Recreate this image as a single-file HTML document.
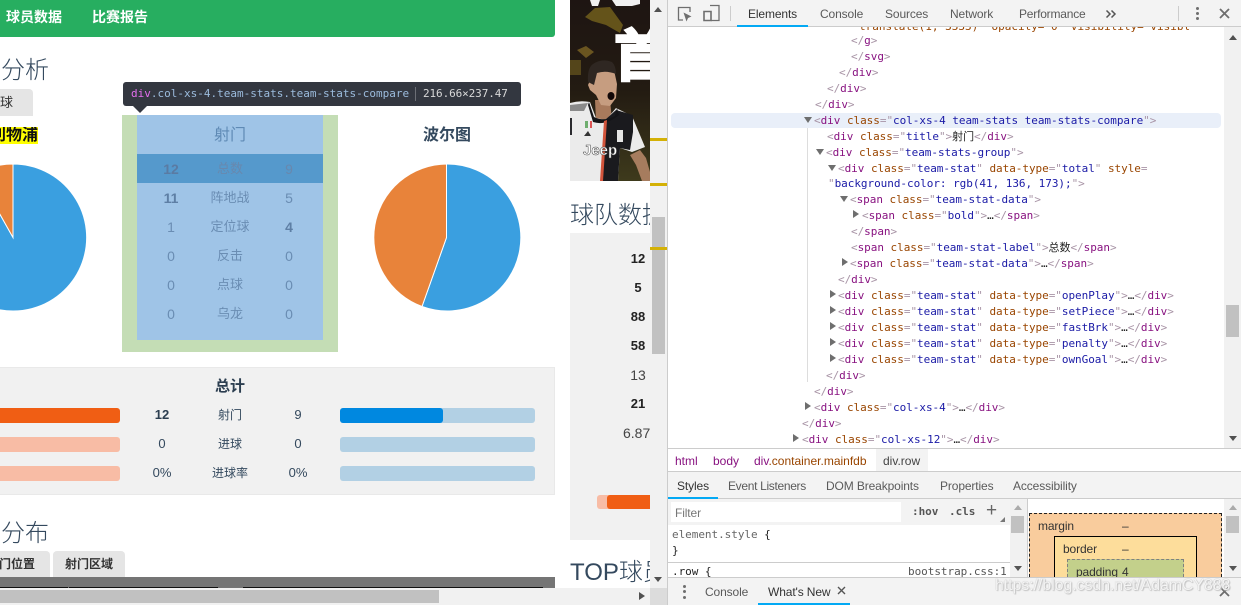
<!DOCTYPE html>
<html lang="zh"><head><meta charset="utf-8"><title>DevTools</title>
<style>
*{box-sizing:border-box}
html,body{margin:0;padding:0;width:1241px;height:605px;overflow:hidden;background:#fff}
body{position:relative;font-family:"Liberation Sans","Noto Sans CJK SC",sans-serif}
.a{position:absolute}
.t{position:absolute;white-space:pre;line-height:16px;height:16px}
.c{transform:translateX(-50%)}
.h{color:#34495e;font-size:24px;line-height:30px;height:30px;font-weight:300}
.n{font-size:13px;color:#333}
.m{position:absolute;white-space:pre;font-family:"DejaVu Sans Mono","Noto Sans CJK SC",monospace;font-size:11px;line-height:16px;height:16px;letter-spacing:-.04px;color:#a894a6}
.m i{font-style:normal;color:#881280}.m b{font-weight:normal;color:#994500}.m u{text-decoration:none;color:#1a1aa6}.m em{font-style:normal;color:#222}
.dt{font-size:12px;color:#5a5a5a;letter-spacing:-.12px}
.ar{position:absolute;width:0;height:0}
.down{border-left:4px solid transparent;border-right:4px solid transparent;border-top:6px solid #6e6e6e}
.right{border-top:4px solid transparent;border-bottom:4px solid transparent;border-left:6px solid #6e6e6e}
.st{color:#6a8db3;font-size:13px}
.bar{position:absolute;height:15px;border-radius:3px}
</style></head><body>

<!-- left page -->
<div class="a" style="left:0;top:0;width:555px;height:37px;background:#27ae60;border-radius:0 0 3px 0"></div>
<div class="t" style="left:6px;top:9px;font-size:14px;font-weight:bold;color:#fff">球员数据</div>
<div class="t" style="left:92px;top:9px;font-size:14px;font-weight:bold;color:#fff">比赛报告</div>
<div class="t h" style="left:1px;top:56px">分析</div>
<div class="a" style="left:0;top:89px;width:33px;height:27px;background:#e5e5e5;border-radius:0 4px 0 0"></div>
<div class="t" style="left:0;top:95px;font-size:13px;color:#333">球</div>
<div class="a" style="left:0;top:127px;width:38px;height:17px;background:#ff0;overflow:hidden"><div class="t" style="left:-10px;top:1px;font-size:16px;font-weight:bold;color:#111">利物浦</div></div>
<svg class="a" style="left:0;top:150px" width="100" height="170" viewBox="0 0 100 170"><path d="M13 87.5V14A73.5 73.5 0 1 1 -23 23.5Z" fill="#3a9fe0" stroke="#fff"/><path d="M13 87.5L-23 23.5A73.5 73.5 0 0 1 13 14Z" fill="#e8833a" stroke="#fff"/></svg>
<div class="a" style="left:0;top:367px;width:555px;height:128px;background:#f1f1f1;border:1px solid #e9e9e9;border-left:0"></div>
<div class="t c" style="left:230px;top:379px;font-size:15px;font-weight:bold;color:#2c3e50">总计</div>
<div class="bar" style="left:-10px;top:408px;width:130px;background:#f05e14"></div>
<div class="bar" style="left:-10px;top:437px;width:130px;background:#f8bca5"></div>
<div class="bar" style="left:-10px;top:466px;width:130px;background:#f8bca5"></div>
<div class="bar" style="left:340px;top:408px;width:195px;background:#b2d0e4"></div>
<div class="bar" style="left:340px;top:408px;width:103px;background:#0088e0"></div>
<div class="bar" style="left:340px;top:437px;width:195px;background:#b2d0e4"></div>
<div class="bar" style="left:340px;top:466px;width:195px;background:#b2d0e4"></div>
<div class="t c n" style="left:162px;top:407px;font-weight:bold;color:#2c3e50">12</div>
<div class="t c n" style="left:230px;top:407px;font-size:12px;color:#34495e">射门</div>
<div class="t c n" style="left:298px;top:407px;color:#34495e">9</div>
<div class="t c n" style="left:162px;top:436px;color:#34495e">0</div>
<div class="t c n" style="left:230px;top:436px;font-size:12px;color:#34495e">进球</div>
<div class="t c n" style="left:298px;top:436px;color:#34495e">0</div>
<div class="t c n" style="left:162px;top:465px;color:#34495e">0%</div>
<div class="t c n" style="left:230px;top:465px;font-size:12px;color:#34495e">进球率</div>
<div class="t c n" style="left:298px;top:465px;color:#34495e">0%</div>
<div class="t h" style="left:1px;top:519px">分布</div>
<div class="a" style="left:0;top:551px;width:50px;height:26px;background:#e5e5e5;border-radius:0 4px 0 0"></div>
<div class="a" style="left:53px;top:551px;width:72px;height:26px;background:#e5e5e5;border-radius:4px 4px 0 0"></div>
<div class="t" style="left:-13px;top:556px;font-size:12px;font-weight:bold;color:#333">射门位置</div>
<div class="t" style="left:65px;top:556px;font-size:12px;font-weight:bold;color:#333">射门区域</div>
<div class="a" style="left:0;top:577px;width:555px;height:11px;background:#757575"></div>
<div class="a" style="left:0;top:587px;width:68px;height:1px;background:#111"></div>
<div class="a" style="left:69px;top:587px;width:149px;height:1px;background:#111"></div>
<div class="a" style="left:243px;top:587px;width:150px;height:1px;background:#111"></div>
<div class="a" style="left:393px;top:587px;width:150px;height:1px;background:#111"></div>
<div class="a" style="left:0;top:588px;width:650px;height:17px;background:#f1f1f1"></div>
<div class="a" style="left:0;top:590px;width:439px;height:13px;background:#c1c1c1"></div>
<div class="ar right" style="left:639px;top:592px;border-left-color:#505050"></div>

<!-- highlight overlay -->
<div class="a" style="left:122px;top:115px;width:216px;height:237px;background:#c4ddb5"></div>
<div class="a" style="left:137px;top:115px;width:186px;height:225px;background:#9fc4e7"></div>
<div class="a" style="left:137px;top:154px;width:186px;height:29px;background:#5599cc"></div>
<div class="t c" style="left:230px;top:128px;font-size:16px;color:#5f8ab5">射门</div>
<div class="t c st" style="left:171px;top:161px;font-weight:bold;font-size:14px;color:#5a7ba3">12</div><div class="t c st" style="left:230px;top:161px;color:#6888ae">总数</div><div class="t c st" style="left:289px;top:161px;font-size:14px;color:#6888ae">9</div>
<div class="t c st" style="left:171px;top:190px;font-weight:bold;font-size:14px;color:#5e7fa5">11</div><div class="t c st" style="left:230px;top:190px">阵地战</div><div class="t c st" style="left:289px;top:190px;font-size:14px">5</div>
<div class="t c st" style="left:171px;top:219px;font-size:14px">1</div><div class="t c st" style="left:230px;top:219px">定位球</div><div class="t c st" style="left:289px;top:219px;font-weight:bold;font-size:14px;color:#5e7fa5">4</div>
<div class="t c st" style="left:171px;top:248px;font-size:14px">0</div><div class="t c st" style="left:230px;top:248px">反击</div><div class="t c st" style="left:289px;top:248px;font-size:14px">0</div>
<div class="t c st" style="left:171px;top:277px;font-size:14px">0</div><div class="t c st" style="left:230px;top:277px">点球</div><div class="t c st" style="left:289px;top:277px;font-size:14px">0</div>
<div class="t c st" style="left:171px;top:306px;font-size:14px">0</div><div class="t c st" style="left:230px;top:306px">乌龙</div><div class="t c st" style="left:289px;top:306px;font-size:14px">0</div>

<div class="t c" style="left:447px;top:128px;font-size:16px;font-weight:bold;color:#34495e">波尔图</div>
<svg class="a" style="left:370px;top:160px" width="155" height="155" viewBox="0 0 155 155"><path d="M76.5 77.5V4A73.5 73.5 0 1 1 52 146.5Z" fill="#3a9fe0" stroke="#fff"/><path d="M76.5 77.5L52 146.5A73.5 73.5 0 0 1 76.5 4Z" fill="#e8833a" stroke="#fff"/></svg>

<!-- tooltip -->
<div class="a" style="left:123px;top:82px;width:398px;height:24px;background:#333740;border-radius:3px"></div>
<div class="a" style="left:133px;top:106px;width:0;height:0;border-left:7px solid transparent;border-right:7px solid transparent;border-top:7px solid #333740"></div>
<div class="t" style="left:131px;top:86px;font-family:'DejaVu Sans Mono',monospace;font-size:11px;color:#9bbbdc"><span style="color:#e36eec">div</span>.col-xs-4.team-stats.team-stats-compare</div>
<div class="a" style="left:415px;top:87px;width:1px;height:14px;background:#6c6f76"></div>
<div class="t" style="left:423px;top:86px;font-family:'DejaVu Sans Mono',monospace;font-size:11px;color:#d9d9d9;letter-spacing:-.1px">216.66×237.47</div>

<!-- middle page -->
<svg class="a" style="left:570px;top:0" width="80" height="181" viewBox="0 0 80 181">
<defs><linearGradient id="bg" x1="0" y1="0" x2="0" y2="1"><stop offset="0" stop-color="#1e1512"/><stop offset=".5" stop-color="#231b12"/><stop offset="1" stop-color="#3e3a1c"/></linearGradient></defs>
<rect width="80" height="181" fill="url(#bg)"/>
<path d="M15 17L25 8L40 7L53 25L50 33L36 25L22 21Z" fill="#64531a"/>
<path d="M7 50L16 46L24 52L16 58Z" fill="#6a5520"/><path d="M0 60L11 60V75H0Z" fill="#54451a"/>
<path d="M20 0H30L28 6H22Z M42 0H70V4L62 6H46Z" fill="#f0f0f0"/>
<text x="44" y="76" font-family="'Noto Sans CJK SC',sans-serif" font-size="56" font-weight="bold" fill="#fff" stroke="#fff" stroke-width="2.5">首</text>
<path d="M25 100L40 100L42 120H26Z" fill="#a87a5c"/>
<path d="M22 76L28 70L44 70L47 84L46 98L40 106L31 105L26 95L20 90L18 85Z" fill="#c69d80"/>
<path d="M18 82Q17 68 23 64Q32 58 42 62Q46 66 46 74Q36 70 27 73L24 85Z" fill="#2f2722"/>
<ellipse cx="41" cy="96" rx="3.5" ry="4" fill="#120808"/>
<path d="M60 155L70 150L76 158L80 172V181H72L66 165Z" fill="#a67c5e"/>
<path d="M0 103Q10 100 20 102L26 118L36 120L46 108L62 116L75 147L62 152L50 148L48 181H0Z" fill="#ebebeb"/>
<path d="M35 120L46 110L63 115V132L60 150L50 148L48 181H31Z" fill="#1a1a1e"/>
<path d="M19 102L24 117Q34 122 45 116L47 108L49 115Q36 126 23 122L18 105Z" fill="#141417"/>
<path d="M34 121L37 120L33 181H30Z" fill="#d2543c"/>
<path d="M0 105L18 103L14 111H0Z" fill="#8a8a8a"/><path d="M0 118L2 118V135H0Z" fill="#2a2a2e"/>
<rect x="15" y="121" width="7" height="7" fill="#6fae6f"/><rect x="18" y="121" width="2" height="7" fill="#eee"/><rect x="20" y="121" width="2" height="7" fill="#d55"/>
<path d="M47 130H53V142H47Z" fill="#e5e5e5"/><path d="M14 136L18 131L21 136Z" fill="#333"/>
<text x="13" y="155" font-family="'Liberation Sans',sans-serif" font-size="15" font-weight="bold" fill="#fff" stroke="#444" stroke-width=".5">Jeep</text>
</svg>
<div class="a" style="left:570px;top:200px;width:80px;height:32px;overflow:hidden"><div class="t h" style="left:0;top:1px">球队数据</div></div>
<div class="a" style="left:570px;top:233px;width:80px;height:307px;background:#f1f1f1"></div>
<div class="t c" style="left:638px;top:251px;font-size:13px;font-weight:bold;color:#222">12</div>
<div class="t c" style="left:638px;top:280px;font-size:13px;font-weight:bold;color:#222">5</div>
<div class="t c" style="left:638px;top:309px;font-size:13px;font-weight:bold;color:#222">88</div>
<div class="t c" style="left:638px;top:338px;font-size:13px;font-weight:bold;color:#222">58</div>
<div class="t c" style="left:638px;top:367px;font-size:14px;color:#444">13</div>
<div class="t c" style="left:638px;top:396px;font-size:13px;font-weight:bold;color:#222">21</div>
<div class="a" style="left:570px;top:425px;width:80px;height:16px;overflow:hidden"><div class="t" style="left:53px;top:0;font-size:14px;color:#444">6.87</div></div>
<div class="a" style="left:597px;top:495px;width:53px;height:14px;background:#f8bca5;border-radius:3px 0 0 3px"></div>
<div class="a" style="left:607px;top:495px;width:43px;height:14px;background:#f05e14;border-radius:3px 0 0 3px"></div>
<div class="a" style="left:570px;top:558px;width:80px;height:30px;overflow:hidden"><div class="t h" style="left:0;top:0">TOP球员</div></div>

<!-- page scrollbar -->
<div class="a" style="left:650px;top:0;width:17px;height:588px;background:#f1f1f1"></div>
<div class="a" style="left:652px;top:217px;width:13px;height:137px;background:#c1c1c1"></div>
<div class="a" style="left:650px;top:138px;width:17px;height:3px;background:#d4b106"></div>
<div class="a" style="left:650px;top:183px;width:17px;height:3px;background:#d4b106"></div>
<div class="a" style="left:650px;top:247px;width:17px;height:3px;background:#d4b106"></div>
<div class="ar" style="left:654px;top:7px;border-left:4px solid transparent;border-right:4px solid transparent;border-bottom:5px solid #505050"></div>
<div class="ar" style="left:654px;top:577px;border-left:4px solid transparent;border-right:4px solid transparent;border-top:5px solid #505050"></div>
<div class="a" style="left:650px;top:588px;width:17px;height:17px;background:#dcdcdc"></div>
<div class="a" style="left:667px;top:0;width:1px;height:605px;background:#ccc"></div>

<!-- devtools top -->
<div class="a" style="left:668px;top:0;width:573px;height:27px;background:#f3f3f3;border-bottom:1px solid #ccc"></div>
<svg class="a" style="left:668px;top:0" width="70" height="27" viewBox="0 0 70 27" fill="none" stroke="#6e6e6e" stroke-width="1.3">
<path d="M15 20H10.5V7.5H22V12"/><path d="M15.5 12.5L23.5 16.5L20 18L18.5 21.5Z" fill="#6e6e6e" stroke="none"/>
<path d="M42 5.5H51V20.5H43"/><path d="M36 11.5H43V20.5H36Z" fill="#f3f3f3" stroke-width="1.6"/>
</svg>
<div class="a" style="left:730px;top:6px;width:1px;height:15px;background:#ccc"></div>
<div class="t dt" style="left:748px;top:6px;color:#333">Elements</div>
<div class="a" style="left:737px;top:25px;width:71px;height:2px;background:#03a9f4"></div>
<div class="t dt" style="left:820px;top:6px">Console</div>
<div class="t dt" style="left:885px;top:6px">Sources</div>
<div class="t dt" style="left:950px;top:6px">Network</div>
<div class="t dt" style="left:1019px;top:6px;letter-spacing:-.2px">Performance</div>
<svg class="a" style="left:1105px;top:9px" width="12" height="10" viewBox="0 0 12 10" fill="none" stroke="#555" stroke-width="1.5"><path d="M1.5 1.5L5 5L1.5 8.5M6.5 1.5L10 5L6.5 8.5"/></svg>
<div class="a" style="left:1178px;top:6px;width:1px;height:15px;background:#ccc"></div>
<div class="a" style="left:1196px;top:7px;width:3px;height:3px;background:#6e6e6e;border-radius:50%"></div><div class="a" style="left:1196px;top:12px;width:3px;height:3px;background:#6e6e6e;border-radius:50%"></div><div class="a" style="left:1196px;top:17px;width:3px;height:3px;background:#6e6e6e;border-radius:50%"></div>
<svg class="a" style="left:1218px;top:7px" width="13" height="13" viewBox="0 0 13 13"><path d="M2 2L11 11M11 2L2 11" stroke="#6e6e6e" stroke-width="1.8"/></svg>

<!-- elements tree -->
<div class="a" style="left:668px;top:27px;width:556px;height:421px;overflow:hidden;background:#fff">
<div class="a" style="left:3px;top:86px;width:550px;height:15px;background:#e9eff9;border-radius:4px"></div>
<div class="a" style="left:139px;top:101px;width:1px;height:254px;background:#ddd"></div>
<div class="a" style="left:0;top:1px;width:556px;height:420px">
<div class="m" style="left:191px;top:-9px;letter-spacing:0;color:#994500;width:330px;overflow:hidden">translate(1, 3333)" opacity="0" visibility="visible"&gt;#</div>
<div class="m" style="left:183px;top:5px">&lt;/<i>g</i>&gt;</div>
<div class="m" style="left:183px;top:21px">&lt;/<i>svg</i>&gt;</div>
<div class="m" style="left:171px;top:37px">&lt;/<i>div</i>&gt;</div>
<div class="m" style="left:159px;top:53px">&lt;/<i>div</i>&gt;</div>
<div class="m" style="left:147px;top:69px">&lt;/<i>div</i>&gt;</div>
<div class="ar down" style="left:136px;top:89px"></div>
<div class="m" style="left:146px;top:85px">&lt;<i>div</i> <b>class</b>="<u>col-xs-4 team-stats team-stats-compare</u>"&gt;</div>
<div class="m" style="left:159px;top:101px">&lt;<i>div</i> <b>class</b>="<u>title</u>"&gt;<em>射门</em>&lt;/<i>div</i>&gt;</div>
<div class="ar down" style="left:148px;top:121px"></div>
<div class="m" style="left:158px;top:117px">&lt;<i>div</i> <b>class</b>="<u>team-stats-group</u>"&gt;</div>
<div class="ar down" style="left:160px;top:137px"></div>
<div class="m" style="left:170px;top:133px">&lt;<i>div</i> <b>class</b>="<u>team-stat</u>" <b>data-type</b>="<u>total</u>" <b>style</b>=</div>
<div class="m" style="left:160px;top:148px">"<u>background-color: rgb(41, 136, 173);</u>"&gt;</div>
<div class="ar down" style="left:172px;top:168px"></div>
<div class="m" style="left:182px;top:164px">&lt;<i>span</i> <b>class</b>="<u>team-stat-data</u>"&gt;</div>
<div class="ar right" style="left:185px;top:182px"></div>
<div class="m" style="left:194px;top:180px">&lt;<i>span</i> <b>class</b>="<u>bold</u>"&gt;<em>…</em>&lt;/<i>span</i>&gt;</div>
<div class="m" style="left:183px;top:196px">&lt;/<i>span</i>&gt;</div>
<div class="m" style="left:183px;top:212px">&lt;<i>span</i> <b>class</b>="<u>team-stat-label</u>"&gt;<em>总数</em>&lt;/<i>span</i>&gt;</div>
<div class="ar right" style="left:174px;top:230px"></div>
<div class="m" style="left:182px;top:228px">&lt;<i>span</i> <b>class</b>="<u>team-stat-data</u>"&gt;<em>…</em>&lt;/<i>span</i>&gt;</div>
<div class="m" style="left:170px;top:244px">&lt;/<i>div</i>&gt;</div>
<div class="ar right" style="left:162px;top:262px"></div>
<div class="m" style="left:170px;top:260px">&lt;<i>div</i> <b>class</b>="<u>team-stat</u>" <b>data-type</b>="<u>openPlay</u>"&gt;<em>…</em>&lt;/<i>div</i>&gt;</div>
<div class="ar right" style="left:162px;top:278px"></div>
<div class="m" style="left:170px;top:276px">&lt;<i>div</i> <b>class</b>="<u>team-stat</u>" <b>data-type</b>="<u>setPiece</u>"&gt;<em>…</em>&lt;/<i>div</i>&gt;</div>
<div class="ar right" style="left:162px;top:294px"></div>
<div class="m" style="left:170px;top:292px">&lt;<i>div</i> <b>class</b>="<u>team-stat</u>" <b>data-type</b>="<u>fastBrk</u>"&gt;<em>…</em>&lt;/<i>div</i>&gt;</div>
<div class="ar right" style="left:162px;top:310px"></div>
<div class="m" style="left:170px;top:308px">&lt;<i>div</i> <b>class</b>="<u>team-stat</u>" <b>data-type</b>="<u>penalty</u>"&gt;<em>…</em>&lt;/<i>div</i>&gt;</div>
<div class="ar right" style="left:162px;top:326px"></div>
<div class="m" style="left:170px;top:324px">&lt;<i>div</i> <b>class</b>="<u>team-stat</u>" <b>data-type</b>="<u>ownGoal</u>"&gt;<em>…</em>&lt;/<i>div</i>&gt;</div>
<div class="m" style="left:158px;top:340px">&lt;/<i>div</i>&gt;</div>
<div class="m" style="left:146px;top:356px">&lt;/<i>div</i>&gt;</div>
<div class="ar right" style="left:137px;top:374px"></div>
<div class="m" style="left:146px;top:372px">&lt;<i>div</i> <b>class</b>="<u>col-xs-4</u>"&gt;<em>…</em>&lt;/<i>div</i>&gt;</div>
<div class="m" style="left:134px;top:388px">&lt;/<i>div</i>&gt;</div>
<div class="ar right" style="left:125px;top:406px"></div>
<div class="m" style="left:134px;top:404px">&lt;<i>div</i> <b>class</b>="<u>col-xs-12</u>"&gt;<em>…</em>&lt;/<i>div</i>&gt;</div>
</div>
</div>
<div class="a" style="left:1224px;top:27px;width:17px;height:421px;background:#f1f1f1"></div>
<div class="a" style="left:1226px;top:305px;width:13px;height:32px;background:#c1c1c1"></div>
<div class="ar" style="left:1229px;top:35px;border-left:4px solid transparent;border-right:4px solid transparent;border-bottom:5px solid #505050"></div>
<div class="ar" style="left:1229px;top:436px;border-left:4px solid transparent;border-right:4px solid transparent;border-top:5px solid #505050"></div>

<!-- crumbs -->
<div class="a" style="left:668px;top:448px;width:573px;height:24px;background:#fff;border-top:1px solid #ccc;border-bottom:1px solid #ccc"></div>
<div class="a" style="left:876px;top:449px;width:52px;height:22px;background:#f3f3f3"></div>
<div class="t" style="left:675px;top:453px;font-size:12px;color:#881280">html</div>
<div class="t" style="left:713px;top:453px;font-size:12px;color:#881280">body</div>
<div class="t" style="left:754px;top:453px;font-size:12px;color:#881280">div<span style="color:#994500">.container.mainfdb</span></div>
<div class="t" style="left:883px;top:453px;font-size:12px;color:#444">div.row</div>

<!-- sub tabs -->
<div class="a" style="left:668px;top:472px;width:573px;height:27px;background:#f3f3f3;border-bottom:1px solid #ccc"></div>
<div class="t dt" style="left:677px;top:478px;color:#333">Styles</div>
<div class="a" style="left:668px;top:497px;width:50px;height:2px;background:#03a9f4"></div>
<div class="t dt" style="left:728px;top:478px;letter-spacing:-.32px">Event Listeners</div>
<div class="t dt" style="left:826px;top:478px">DOM Breakpoints</div>
<div class="t dt" style="left:940px;top:478px">Properties</div>
<div class="t dt" style="left:1013px;top:478px">Accessibility</div>

<!-- styles pane -->
<div class="a" style="left:668px;top:499px;width:342px;height:26px;background:#f3f3f3"></div>
<div class="a" style="left:671px;top:502px;width:230px;height:20px;background:#fff"></div>
<div class="t dt" style="left:675px;top:505px;color:#777">Filter</div>
<div class="m" style="left:912px;top:504px;font-weight:bold;color:#555">:hov</div>
<div class="m" style="left:949px;top:504px;font-weight:bold;color:#555">.cls</div>
<div class="t" style="left:986px;top:503px;font-size:19px;color:#666">+</div>
<div class="ar" style="left:1000px;top:517px;border-left:5px solid transparent;border-bottom:5px solid #777"></div>
<div class="m" style="left:672px;top:527px;color:#666">element.style <span style="color:#222">{</span></div>
<div class="m" style="left:672px;top:543px;color:#222">}</div>
<div class="a" style="left:668px;top:562px;width:342px;height:1px;background:#ccc"></div>
<div class="m" style="left:672px;top:564px;color:#222">.row {</div>
<div class="m" style="left:908px;top:564px;color:#555">bootstrap.css:1</div>
<div class="a" style="left:1010px;top:499px;width:17px;height:78px;background:#f1f1f1"></div>
<div class="a" style="left:1011px;top:516px;width:13px;height:17px;background:#c1c1c1"></div>
<div class="ar" style="left:1014px;top:505px;border-left:4px solid transparent;border-right:4px solid transparent;border-bottom:5px solid #aaa"></div>
<div class="ar" style="left:1014px;top:566px;border-left:4px solid transparent;border-right:4px solid transparent;border-top:5px solid #555"></div>
<div class="a" style="left:1027px;top:499px;width:1px;height:78px;background:#ccc"></div>

<!-- box model -->
<div class="a" style="left:1029px;top:513px;width:193px;height:64px;background:#f9cc9d;border:1px dashed #222;border-bottom:0"></div>
<div class="t dt" style="left:1038px;top:518px;color:#333">margin</div><div class="t dt" style="left:1122px;top:518px;color:#333">–</div>
<div class="a" style="left:1054px;top:536px;width:143px;height:41px;background:#fddd9b;border:1px solid #000;border-bottom:0"></div>
<div class="t dt" style="left:1063px;top:541px;color:#333">border</div><div class="t dt" style="left:1122px;top:541px;color:#333">–</div>
<div class="a" style="left:1067px;top:559px;width:117px;height:18px;background:#c3d08b;border:1px dashed #808080;border-bottom:0"></div>
<div class="t dt" style="left:1076px;top:564px;color:#333">padding</div><div class="t dt" style="left:1122px;top:564px;color:#333">4</div>
<div class="a" style="left:1224px;top:499px;width:17px;height:78px;background:#f1f1f1"></div>
<div class="a" style="left:1226px;top:516px;width:13px;height:17px;background:#c1c1c1"></div>
<div class="ar" style="left:1229px;top:505px;border-left:4px solid transparent;border-right:4px solid transparent;border-bottom:5px solid #aaa"></div>
<div class="ar" style="left:1229px;top:566px;border-left:4px solid transparent;border-right:4px solid transparent;border-top:5px solid #555"></div>

<!-- drawer -->
<div class="a" style="left:668px;top:577px;width:573px;height:28px;background:#f3f3f3;border-top:1px solid #ccc"></div>
<div class="a" style="left:683px;top:585px;width:3px;height:3px;background:#6e6e6e;border-radius:50%"></div><div class="a" style="left:683px;top:590px;width:3px;height:3px;background:#6e6e6e;border-radius:50%"></div><div class="a" style="left:683px;top:596px;width:3px;height:3px;background:#6e6e6e;border-radius:50%"></div>
<div class="t dt" style="left:705px;top:584px">Console</div>
<div class="t dt" style="left:768px;top:584px;color:#333">What's New</div>
<svg class="a" style="left:837px;top:586px" width="9" height="9" viewBox="0 0 9 9"><path d="M1 1L8 8M8 1L1 8" stroke="#555" stroke-width="1.4"/></svg>
<div class="a" style="left:758px;top:603px;width:92px;height:2px;background:#03a9f4"></div>
<svg class="a" style="left:1218px;top:585px" width="13" height="13" viewBox="0 0 13 13"><path d="M2 2L11 11M11 2L2 11" stroke="#6e6e6e" stroke-width="1.8"/></svg>
<div class="t" style="left:995px;top:576px;height:20px;line-height:20px;font-size:15.8px;color:rgba(255,255,255,.85);text-shadow:0 0 1px #a8a8a8,1px 1px 1px #c4c4c4">https://blog.csdn.net/AdamCY888</div>
</body></html>
